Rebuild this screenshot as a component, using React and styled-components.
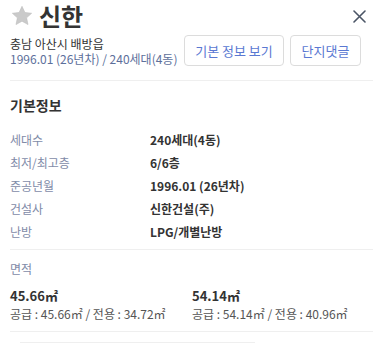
import React from "react";
import styled, { createGlobalStyle } from "styled-components";

const Global = createGlobalStyle`
  html, body { margin: 0; padding: 0; background: #fff; }
  body { font-family: "Noto Sans CJK KR", "Noto Sans", sans-serif; color: #333; }
  * { box-sizing: border-box; }
`;

const Panel = styled.div`
  width: 381px;
  padding: 1px 8px 0 10px;
`;

const TitleRow = styled.div`
  display: flex;
  align-items: center;
  height: 30px;
  margin-bottom: 4px;
`;

const Star = styled.svg`
  width: 24px;
  height: 24px;
  margin: 0 5px 0 0;
  flex: none;
`;

const Title = styled.h1`
  margin: 0;
  font-size: 24px;
  line-height: 30px;
  font-weight: 700;
  color: #333;
  flex: 1;
`;

const CloseBtn = styled.button`
  border: 0;
  background: none;
  padding: 0;
  margin-right: 7px;
  width: 13px;
  height: 13px;
  display: flex;
`;

const InfoRow = styled.div`
  display: flex;
  align-items: center;
  justify-content: space-between;
  height: 31px;
`;

const InfoText = styled.div`
  font-size: 12px;
  line-height: 15px;
`;

const Line = styled.div`
  color: ${(p) => p.$color || "#333"};
  white-space: nowrap;
`;

const Buttons = styled.div`
  display: flex;
  gap: 6px;
  margin-right: 12px;
`;

const OutlineButton = styled.button`
  height: 31px;
  width: ${(p) => p.$w}px;
  border: 1px solid #dcdcdc;
  border-radius: 4px;
  background: #fff;
  color: #5a78d2;
  font-family: inherit;
  font-size: 13px;
  padding: 0;
  white-space: nowrap;
`;

const Divider = styled.hr`
  border: 0;
  height: 1px;
  background: #efefef;
  margin: ${(p) => p.$m || "0"};
`;

const SectionTitle = styled.h2`
  margin: 14px 0 0;
  font-size: 14px;
  line-height: 20px;
  font-weight: 700;
  color: #333;
`;

const InfoTable = styled.dl`
  margin: 13px 0 0;
  display: grid;
  grid-template-columns: 140px 1fr;
  grid-auto-rows: 23px;
  align-items: center;
  font-size: 12px;
`;

const Term = styled.dt`
  color: #7f8ba8;
`;

const Desc = styled.dd`
  margin: 0;
  font-weight: 700;
  color: #333;
`;

const SubLabel = styled.div`
  margin-top: 10px;
  font-size: 12px;
  line-height: 18px;
  color: #7f8ba8;
`;

const AreaGrid = styled.div`
  margin-top: 9px;
  display: grid;
  grid-template-columns: 182px 1fr;
`;

const AreaMain = styled.div`
  font-size: 13px;
  line-height: 18px;
  font-weight: 700;
  color: #333;
`;

const AreaSub = styled.div`
  font-size: 12px;
  line-height: 18px;
  color: #555;
  white-space: nowrap;
`;

const NextLine = styled.div`
  margin: 10px 0 0 10px;
  width: 235px;
  height: 1px;
  background: #efefef;
`;

const rows = [
  ["세대수", "240세대(4동)"],
  ["최저/최고층", "6/6층"],
  ["준공년월", "1996.01 (26년차)"],
  ["건설사", "신한건설(주)"],
  ["난방", "LPG/개별난방"],
];

const areas = [
  ["45.66㎡", "공급 : 45.66㎡ / 전용 : 34.72㎡"],
  ["54.14㎡", "공급 : 54.14㎡ / 전용 : 40.96㎡"],
];

export default function App() {
  return (
    <>
      <Global />
      <Panel>
        <TitleRow>
          <Star viewBox="0 0 24 24">
            <path
              d="M12 2.3l2.9 6.2 6.75.75-5.05 4.6 1.4 6.7L12 17.2l-6 3.35 1.4-6.7-5.05-4.6 6.75-.75z"
              fill="#cacaca"
              stroke="#bdbdbd"
              strokeWidth="0.6"
              strokeLinejoin="round"
            />
          </Star>
          <Title>신한</Title>
          <CloseBtn aria-label="닫기">
            <svg width="13" height="13" viewBox="0 0 13 13">
              <path d="M1 1l11 11M12 1L1 12" stroke="#4b5566" strokeWidth="1.6" strokeLinecap="round" />
            </svg>
          </CloseBtn>
        </TitleRow>
        <InfoRow>
          <InfoText>
            <Line>충남 아산시 배방읍</Line>
            <Line $color="#5d6f9b">1996.01 (26년차) / 240세대(4동)</Line>
          </InfoText>
          <Buttons>
            <OutlineButton $w={100}>기본 정보 보기</OutlineButton>
            <OutlineButton $w={71}>단지댓글</OutlineButton>
          </Buttons>
        </InfoRow>
        <Divider $m="14px 0 0" />
        <SectionTitle>기본정보</SectionTitle>
        <InfoTable>
          {rows.map(([k, v]) => (
            <React.Fragment key={k}>
              <Term>{k}</Term>
              <Desc>{v}</Desc>
            </React.Fragment>
          ))}
        </InfoTable>
        <Divider $m="6px 0 0" />
        <SubLabel>면적</SubLabel>
        <AreaGrid>
          {areas.map(([a, b]) => (
            <div key={a}>
              <AreaMain>{a}</AreaMain>
              <AreaSub>{b}</AreaSub>
            </div>
          ))}
        </AreaGrid>
        <Divider $m="8px 0 0" />
        <NextLine />
      </Panel>
    </>
  );
}
